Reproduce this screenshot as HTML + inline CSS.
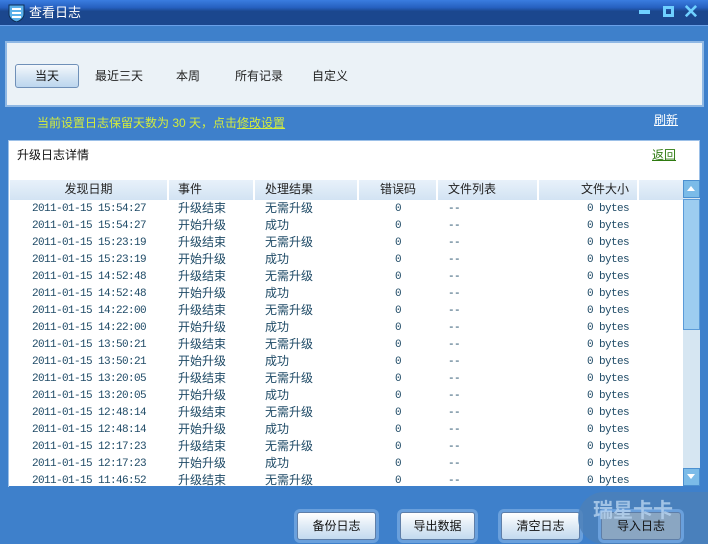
<!DOCTYPE html>
<html><head><meta charset="utf-8"><style>
*{margin:0;padding:0;box-sizing:border-box}
body{width:708px;height:544px;overflow:hidden;background:#3e80cb;font-family:"Liberation Sans","Noto Sans CJK SC",sans-serif;font-size:12px;position:relative}
.abs{position:absolute}
#title{left:0;top:0;width:708px;height:26px;background:linear-gradient(#3a7de0 0,#2660c0 30%,#1b478e 45%,#1b478e 100%);border-bottom:1px solid #6aa0e8}
#title span{position:absolute;left:29px;top:2px;color:#fff;font-size:13px}
#panel{left:5px;top:41px;width:699px;height:66px;background:#ebf2f7;border:2px solid #8fb8e4}
.tab{position:absolute;top:73px;font-size:12px;color:#222}
#btn1{left:15px;top:64px;width:64px;height:24px;border:1px solid #6f90b8;border-radius:3px;background:linear-gradient(#f4f8fc,#d3e4f3 55%,#bcd6ee);text-align:center;line-height:22px;color:#111}
#info{left:37px;top:114px;color:#d4ec3c;font-size:12px}
#info u{text-decoration:underline}
#refresh{left:654px;top:111px;color:#fff;text-decoration:underline}
#box{left:8px;top:140px;width:692px;height:347px;background:#fff;border:1px solid #9cc0e8}
#hdr{left:10px;top:180px;width:673px;height:20px;background:linear-gradient(#e8f1fa,#d2e3f3);}
.h{position:absolute;top:180px;height:20px;line-height:19px;color:#222;border-right:2px solid #fff}
.r{position:absolute;font-size:12px;color:#1e4a66;white-space:pre;line-height:14px;height:14px}
.m{font-family:"Liberation Mono",monospace;font-size:11px;letter-spacing:-0.6px;padding-top:1px}
#sb{left:683px;top:180px;width:17px;height:306px;background:#d6e6f2}
.b{position:absolute;top:512px;height:28px;border:1px solid #5e7ea8;border-radius:3px;background:linear-gradient(#ffffff,#dce9f5 55%,#c3daef);text-align:center;line-height:26px;color:#111;box-shadow:0 0 0 3px #6aa0dc}
</style></head><body>
<div id="title" class="abs">
<svg class="abs" style="left:8px;top:3px" width="17" height="19"><path d="M1 2h15v9c0 4-4 7-7.5 8C5 18 1 15 1 11z" fill="#5ab0ea" stroke="#0d2d55"/><rect x="4" y="5" width="9" height="2" fill="#fff"/><rect x="4" y="9" width="9" height="2" fill="#fff"/><rect x="4" y="13" width="9" height="2" fill="#fff"/></svg>
<span>查看日志</span>
<div class="abs" style="left:639px;top:10px;width:11px;height:4px;background:#6fd0ff"></div>
<div class="abs" style="left:663px;top:6px;width:11px;height:11px;border:3px solid #6fd0ff"></div>
<div class="abs" style="left:683px;top:1px;color:#6fd0ff;font-size:19px;font-weight:bold">✕</div>
</div>
<div id="panel" class="abs"></div>
<div id="btn1" class="abs">当天</div>
<div class="tab" style="left:95px;top:67px">最近三天</div>
<div class="tab" style="left:176px;top:67px">本周</div>
<div class="tab" style="left:235px;top:67px">所有记录</div>
<div class="tab" style="left:312px;top:67px">自定义</div>
<div id="info" class="abs">当前设置日志保留天数为 30 天，点击<u>修改设置</u></div>
<div id="refresh" class="abs">刷新</div>
<div id="box" class="abs"></div>
<div class="abs" style="left:17px;top:146px;color:#111">升级日志详情</div>
<div class="abs" style="left:652px;top:146px;color:#2e7a10;text-decoration:underline">返回</div>
<div id="hdr" class="abs"></div>
<div class="h" style="left:10px;width:159px;text-align:center">发现日期</div>
<div class="h" style="left:169px;width:86px;padding-left:9px">事件</div>
<div class="h" style="left:255px;width:104px;padding-left:10px">处理结果</div>
<div class="h" style="left:359px;width:79px;padding-left:21px">错误码</div>
<div class="h" style="left:438px;width:101px;padding-left:10px">文件列表</div>
<div class="h" style="left:539px;width:100px;padding-left:42px">文件大小</div>
<div id="rows"></div>
<div id="sb" class="abs"><div class="abs" style="left:0;top:0;width:17px;height:18px;background:#7bbbe8;border:1px solid #4c90d0"></div><div class="abs" style="left:4px;top:6px;border:4px solid transparent;border-bottom:5px solid #fff;border-top:0"></div><div class="abs" style="left:0;top:19px;width:17px;height:131px;background:#9dcdf0;border:1px solid #5b9bd8"></div><div class="abs" style="left:0;top:288px;width:17px;height:18px;background:#7bbbe8;border:1px solid #4c90d0"></div><div class="abs" style="left:4px;top:294px;border:4px solid transparent;border-top:5px solid #fff;border-bottom:0"></div></div>
<div class="b" style="left:297px;width:79px">备份日志</div>
<div class="b" style="left:400px;width:75px">导出数据</div>
<div class="b" style="left:501px;width:79px">清空日志</div>
<div class="abs" style="left:578px;top:492px;width:130px;height:52px;background:#4c7fb8;border-radius:26px 0 0 26px;opacity:.8"></div>
<div class="b" style="left:601px;width:80px;background:#8aa6c2">导入日志</div>
<div class="abs" style="left:593px;top:494px;color:#b8d4f0;font-size:20px;font-weight:bold;opacity:.8">瑞星卡卡</div>
<script>
var t=["15:54:27","15:54:27","15:23:19","15:23:19","14:52:48","14:52:48","14:22:00","14:22:00","13:50:21","13:50:21","13:20:05","13:20:05","12:48:14","12:48:14","12:17:23","12:17:23","11:46:52"];
var h="";
for(var i=0;i<t.length;i++){var y=201+17*i;var e=i%2==0;
h+='<div class="r m" style="left:32px;top:'+y+'px">2011-01-15 '+t[i]+'</div>'+
'<div class="r" style="left:178px;top:'+y+'px">'+(e?'升级结束':'开始升级')+'</div>'+
'<div class="r" style="left:265px;top:'+y+'px">'+(e?'无需升级':'成功')+'</div>'+
'<div class="r m" style="left:395px;top:'+y+'px">0</div>'+
'<div class="r m" style="left:448px;top:'+y+'px">--</div>'+
'<div class="r m" style="left:587px;top:'+y+'px">0 bytes</div>';}
var d=document.getElementById('rows');d.innerHTML=h;
</script>
<div class="abs" style="left:9px;top:486px;width:691px;height:2px;background:#3e80cb"></div>
</body></html>
